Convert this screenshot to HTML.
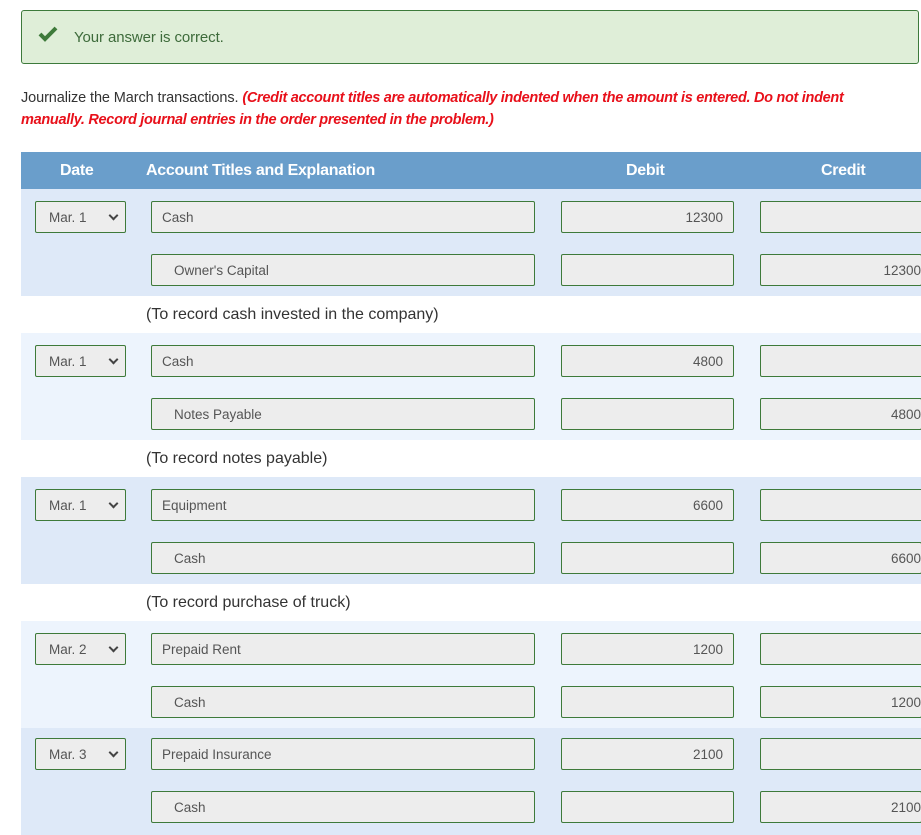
<!DOCTYPE html>
<html><head><meta charset="utf-8"><style>
*{box-sizing:border-box;margin:0;padding:0}
body{width:921px;height:827px;overflow:hidden;background:#fff;font-family:"Liberation Sans",sans-serif;position:relative}
.a{position:absolute}
.banner{left:21px;top:10px;width:898px;height:54px;background:#dfeed8;border:1px solid #3d7a3b;border-radius:3px}
.banner span{position:absolute;left:52px;top:18px;font-size:15px;color:#3e6b3b;letter-spacing:-0.1px}
.instr{left:21px;top:87px;font-size:14.5px;line-height:22px;color:#333;letter-spacing:-0.1px;white-space:nowrap}
.instr i{color:#e8101a;font-weight:bold;letter-spacing:-0.3px}
.hdr{left:21px;top:152px;width:900px;height:37px;background:#6a9ecb;color:#fff;font-weight:bold;font-size:16px}
.hdr div{position:absolute;top:10px;letter-spacing:-0.3px}
.grp{left:21px;width:900px;height:107px}
.dk{background:#dee9f8}.lt{background:#edf4fd}
.in{position:absolute;height:32px;background:#ededed;border:1px solid #3e7a3a;border-radius:2px;font-size:13.5px;color:#555;padding-top:8px;white-space:nowrap;overflow:hidden}
.sel{width:91px;padding-left:13px}
.sel::after{content:"";position:absolute;right:8px;top:10px;width:5px;height:5px;border-right:2px solid #444;border-bottom:2px solid #444;transform:rotate(45deg)}
.acc{width:384px;padding-left:10px}
.acc.c{padding-left:22px}
.deb{width:173px;text-align:right;padding-right:10px}
.cre{width:170px;text-align:right;padding-right:0}
.exp{left:146px;font-size:16px;color:#333}
</style></head><body>
<div class="a banner"><svg class="a" style="left:16px;top:15px" width="20" height="16" viewBox="0 0 20 16"><path d="M2 8 L7 13 L18 2" fill="none" stroke="#3e7a3a" stroke-width="4"/></svg><span>Your answer is correct.</span></div>
<div class="a instr">Journalize the March transactions. <i>(Credit account titles are automatically indented when the amount is entered. Do not indent</i><br><i>manually. Record journal entries in the order presented in the problem.)</i></div>
<div class="a hdr"><div style="left:39px">Date</div><div style="left:125px">Account Titles and Explanation</div><div style="left:605px">Debit</div><div style="left:800px">Credit</div></div>

<div class="a grp dk" style="top:189px">
<div class="in sel" style="left:14px;top:12px">Mar. 1</div>
<div class="in acc" style="left:130px;top:12px">Cash</div>
<div class="in deb" style="left:540px;top:12px">12300</div>
<div class="in cre" style="left:739px;top:12px;width:170px"></div>
<div class="in acc c" style="left:130px;top:65px">Owner's Capital</div>
<div class="in deb" style="left:540px;top:65px"></div>
<div class="in cre" style="left:739px;top:65px;width:162px">12300</div>
</div>
<div class="a exp" style="top:306px">(To record cash invested in the company)</div>

<div class="a grp lt" style="top:333px">
<div class="in sel" style="left:14px;top:12px">Mar. 1</div>
<div class="in acc" style="left:130px;top:12px">Cash</div>
<div class="in deb" style="left:540px;top:12px">4800</div>
<div class="in cre" style="left:739px;top:12px;width:170px"></div>
<div class="in acc c" style="left:130px;top:65px">Notes Payable</div>
<div class="in deb" style="left:540px;top:65px"></div>
<div class="in cre" style="left:739px;top:65px;width:162px">4800</div>
</div>
<div class="a exp" style="top:450px">(To record notes payable)</div>

<div class="a grp dk" style="top:477px">
<div class="in sel" style="left:14px;top:12px">Mar. 1</div>
<div class="in acc" style="left:130px;top:12px">Equipment</div>
<div class="in deb" style="left:540px;top:12px">6600</div>
<div class="in cre" style="left:739px;top:12px;width:170px"></div>
<div class="in acc c" style="left:130px;top:65px">Cash</div>
<div class="in deb" style="left:540px;top:65px"></div>
<div class="in cre" style="left:739px;top:65px;width:162px">6600</div>
</div>
<div class="a exp" style="top:594px">(To record purchase of truck)</div>

<div class="a grp lt" style="top:621px">
<div class="in sel" style="left:14px;top:12px">Mar. 2</div>
<div class="in acc" style="left:130px;top:12px">Prepaid Rent</div>
<div class="in deb" style="left:540px;top:12px">1200</div>
<div class="in cre" style="left:739px;top:12px;width:170px"></div>
<div class="in acc c" style="left:130px;top:65px">Cash</div>
<div class="in deb" style="left:540px;top:65px"></div>
<div class="in cre" style="left:739px;top:65px;width:162px">1200</div>
</div>

<div class="a grp dk" style="top:728px">
<div class="in sel" style="left:14px;top:10px">Mar. 3</div>
<div class="in acc" style="left:130px;top:10px">Prepaid Insurance</div>
<div class="in deb" style="left:540px;top:10px">2100</div>
<div class="in cre" style="left:739px;top:10px;width:170px"></div>
<div class="in acc c" style="left:130px;top:63px">Cash</div>
<div class="in deb" style="left:540px;top:63px"></div>
<div class="in cre" style="left:739px;top:63px;width:162px">2100</div>
</div>
</body></html>
